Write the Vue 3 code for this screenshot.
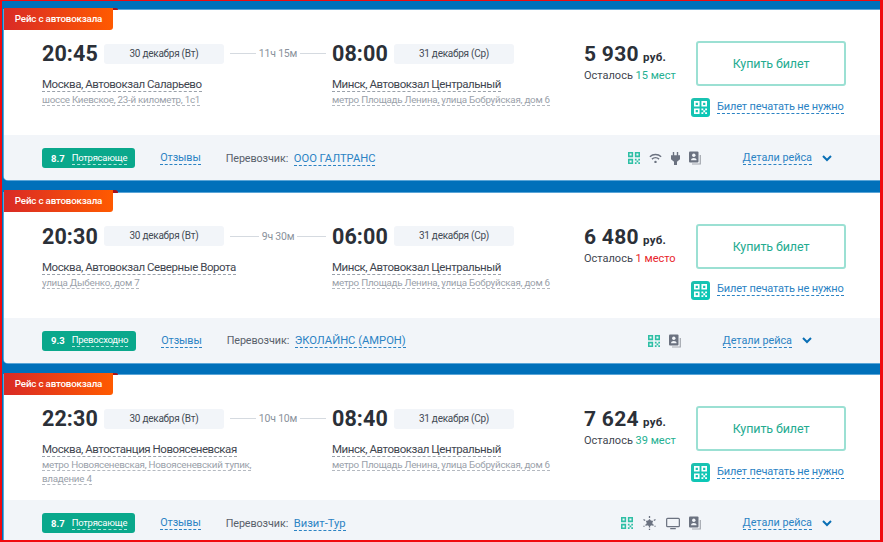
<template>
<div class="page">
  <article v-for="trip in trips" :key="trip.id" class="trip-card">
    <div class="trip-tag">Рейс с автовокзала</div>
    <div class="trip-body">
      <div class="route-col">
        <div class="time-row">
          <strong class="time">{{ trip.depart }}</strong>
          <span class="date-chip">30 декабря (Вт)</span>
          <span class="duration">
            <i></i><em>{{ trip.duration }}</em><i></i>
          </span>
        </div>
        <div class="station"><span>{{ trip.from }}</span></div>
        <div class="address"><span>{{ trip.fromAddress }}</span></div>
      </div>
      <div class="route-col arrive">
        <div class="time-row">
          <strong class="time">{{ trip.arrive }}</strong>
          <span class="date-chip">31 декабря (Ср)</span>
        </div>
        <div class="station"><span>Минск, Автовокзал Центральный</span></div>
        <div class="address"><span>метро Площадь Ленина, улица Бобруйская, дом 6</span></div>
      </div>
      <div class="price-col">
        <div class="price"><span>{{ trip.price }}</span><small>руб.</small></div>
        <div class="seats">Осталось <span :class="{ low: trip.low }">{{ trip.seats }}</span></div>
      </div>
      <div class="buy-col">
        <button class="buy-btn">Купить билет</button>
        <div class="no-print">
          <span class="qr-box">
            <svg width="13" height="13" viewBox="0 0 14 14"><use href="#qr-mark" /></svg>
          </span>
          <a>Билет печатать не нужно</a>
        </div>
      </div>
    </div>
    <div class="trip-footer" :class="{ short: trip.icons.length === 1 }">
      <div class="rating">
        <b>{{ trip.score }}</b><span>{{ trip.scoreLabel }}</span>
      </div>
      <a class="reviews">Отзывы</a>
      <div class="carrier">Перевозчик: <a>{{ trip.carrier }}</a></div>
      <div class="features">
        <svg class="qr-small" width="12" height="12" viewBox="0 0 14 14"><use href="#qr-mark" /></svg>
        <template v-for="icon in trip.icons" :key="icon">
          <svg v-if="icon === 'wifi'" width="13" height="12" viewBox="0 0 15 13" fill="none" stroke="#6b7280" stroke-width="1.6">
            <path d="M1 5c3.600-3.400 9.400-3.400 13 0M3.400 7.800c2.300-2.100 5.900-2.100 8.200 0" />
            <circle cx="7.500" cy="11" r="1.400" fill="#6b7280" stroke="none" />
          </svg>
          <svg v-else-if="icon === 'plug'" width="9" height="13" viewBox="0 0 9 13" fill="#6b7280">
            <path d="M1.800 0h1.400v3.300h2.600V0h1.400v3.300H9v4L6 9.800V13H3V9.800L0 7.300v-4h1.800z" />
          </svg>
          <svg v-else-if="icon === 'doc'" width="12" height="14" viewBox="0 0 12 14">
            <path d="M3 13h8.300V4" fill="none" stroke="#a3a8af" stroke-width="1.200" />
            <rect x="0" y="0.500" width="9.500" height="11" rx="1" fill="#6b7280" />
            <circle cx="4.800" cy="4.200" r="1.700" fill="#f2f5f9" />
            <path d="M2 9.300c0-3.200 5.600-3.200 5.600 0z" fill="#f2f5f9" />
          </svg>
          <svg v-else-if="icon === 'snow'" width="15" height="14" viewBox="0 0 15 14" fill="none" stroke="#6b7280" stroke-width="1.300">
            <circle cx="7.500" cy="7" r="3" fill="#6b7280" stroke="none" />
            <path d="M7.500 0v14M1.500 3.500l12 7M13.500 3.500l-12 7" stroke-dasharray="2 1.200" />
          </svg>
          <svg v-else-if="icon === 'tv'" width="14" height="13" viewBox="0 0 15 13" fill="none" stroke="#6b7280" stroke-width="1.300">
            <rect x="0.700" y="1" width="13.600" height="8.800" rx="1" />
            <path d="M4.500 12h6" />
          </svg>
        </template>
      </div>
      <a class="details">Детали рейса</a>
      <svg class="chevron" width="10" height="7" viewBox="0 0 10 7" fill="none" stroke="#0a6fb5" stroke-width="2">
        <path d="M1 1l4 4 4-4" />
      </svg>
    </div>
  </article>
  <div class="frame"></div>
  <svg width="0" height="0" class="defs">
    <defs>
      <g id="qr-mark">
        <path fill="currentColor" fill-rule="evenodd" d="M0 0h6v6H0zM1.800 1.800v2.400h2.400V1.800zM8 0h6v6H8zM9.800 1.800v2.400h2.400V1.800zM0 8h6v6H0zM1.800 9.800v2.400h2.400V9.800z" />
        <path fill="currentColor" d="M8 8h2v2H8zM12 8h2v2h-2zM10 10h2v2h-2zM8 12h2v2H8zM12 12h2v2h-2z" />
      </g>
    </defs>
  </svg>
</div>
</template>

<script setup>
const trips = [
  {
    id: 1,
    depart: '20:45',
    arrive: '08:00',
    duration: '11ч 15м',
    from: 'Москва, Автовокзал Саларьево',
    fromAddress: 'шоссе Киевское, 23-й километр, 1с1',
    price: '5 930',
    seats: '15 мест',
    low: false,
    score: '8.7',
    scoreLabel: 'Потрясающе',
    carrier: 'ООО ГАЛТРАНС',
    icons: ['wifi', 'plug', 'doc'],
  },
  {
    id: 2,
    depart: '20:30',
    arrive: '06:00',
    duration: '9ч 30м',
    from: 'Москва, Автовокзал Северные Ворота',
    fromAddress: 'улица Дыбенко, дом 7',
    price: '6 480',
    seats: '1 место',
    low: true,
    score: '9.3',
    scoreLabel: 'Превосходно',
    carrier: 'ЭКОЛАЙНС (АМРОН)',
    icons: ['doc'],
  },
  {
    id: 3,
    depart: '22:30',
    arrive: '08:40',
    duration: '10ч 10м',
    from: 'Москва, Автостанция Новоясеневская',
    fromAddress: 'метро Новоясеневская, Новоясеневский тупик, владение 4',
    price: '7 624',
    seats: '39 мест',
    low: false,
    score: '8.7',
    scoreLabel: 'Потрясающе',
    carrier: 'Визит-Тур',
    icons: ['snow', 'tv', 'doc'],
  },
]
</script>

<style>
html,
body {
  margin: 0;
  overflow: hidden;
}
</style>

<style scoped>
.page {
  position: relative;
  box-sizing: border-box;
  width: 883px;
  height: 542px;
  padding: 10px 0 0 4px;
  overflow: hidden;
  background: #0070ba;
  font-family: Roboto, "Liberation Sans", sans-serif;
  color: #3f4650;
}

.frame {
  position: absolute;
  inset: 0;
  border-style: solid;
  border-color: #f00a0e;
  border-width: 1px 3px 2px 2px;
  pointer-events: none;
}

.defs {
  position: absolute;
}

.trip-card {
  position: relative;
  margin-bottom: 12.5px;
  border-radius: 0 0 0 4px;
  background: #fff;
  box-shadow: 0 0 0 1px rgba(150, 200, 235, 0.6);
}

.trip-tag {
  position: absolute;
  top: -2.500px;
  left: 0;
  width: 109px;
  height: 22px;
  border-radius: 0 0 3px 0;
  background: linear-gradient(90deg, #d92a26, #ff5a00);
  color: #fff;
  font-size: 9.800px;
  font-weight: 500;
  line-height: 21px;
  letter-spacing: -0.2px;
  text-align: center;
}

.trip-tag::after {
  content: "";
  position: absolute;
  top: 0;
  left: 100%;
  width: 5px;
  height: 2.500px;
  border-radius: 0 3px 0 0;
  background: #a8101a;
}

.trip-body {
  display: grid;
  grid-template-columns: 290px 252px 112px 190px;
  height: 125px;
  box-sizing: border-box;
  padding: 33px 0 0 38px;
}

.time-row {
  display: flex;
  align-items: center;
  height: 21px;
}

.time {
  width: 62px;
  color: #2b3038;
  font-size: 21.500px;
  font-weight: 700;
  line-height: 21px;
  letter-spacing: 0.1px;
}

.date-chip {
  width: 120px;
  height: 20px;
  border-radius: 3px;
  background: #f2f5f9;
  color: #444b55;
  font-size: 10px;
  line-height: 20px;
  letter-spacing: -0.25px;
  text-align: center;
}

.duration {
  display: flex;
  align-items: center;
  width: 96px;
  margin-left: 6px;
  gap: 3px;
  color: #8a929c;
  font-size: 10.500px;
  letter-spacing: -0.2px;
  white-space: nowrap;
}

.duration i {
  flex: 1;
  height: 1px;
  background: #d5dae0;
}

.duration em {
  font-style: normal;
}

.station {
  margin-top: 13px;
  font-size: 11.500px;
  line-height: 15px;
  letter-spacing: -0.45px;
}

.station span {
  border-bottom: 1px dashed #9aa1aa;
}

.address {
  width: 220px;
  margin-top: 1px;
  color: #9aa1aa;
  font-size: 9.800px;
  line-height: 14px;
  letter-spacing: -0.25px;
}

.arrive .address {
  width: auto;
}

.address span {
  border-bottom: 1px dashed #b4b9c0;
}

.price {
  display: flex;
  align-items: baseline;
  gap: 4px;
  margin-top: -2px;
  color: #2b3038;
  font-size: 21px;
  font-weight: 700;
  line-height: 26px;
  letter-spacing: 0.3px;
}

.price small {
  font-size: 11.500px;
}

.seats {
  margin-top: -2px;
  font-size: 11px;
  line-height: 16px;
}

.seats span {
  color: #23b091;
}

.seats .low {
  color: #e8232a;
}

.buy-col {
  display: flex;
  flex-direction: column;
  margin-top: -2px;
}

.buy-btn {
  width: 150px;
  height: 45px;
  border: 2px solid #9be0d3;
  border-radius: 3px;
  background: #fff;
  color: #23ab90;
  font-family: inherit;
  font-size: 12.500px;
  letter-spacing: -0.1px;
}

.no-print {
  display: flex;
  align-items: center;
  gap: 7px;
  margin: 12px 0 0 -5px;
  font-size: 11px;
  letter-spacing: -0.15px;
}

.qr-box {
  display: flex;
  align-items: center;
  justify-content: center;
  width: 19px;
  height: 19px;
  border-radius: 3px;
  background: linear-gradient(135deg, #22bfae, #06c9b8);
  color: #fff;
}

.no-print a,
.reviews,
.carrier a,
.details,
.rating span {
  border-bottom: 1px dashed currentColor;
  color: #2b83c4;
}

.no-print a {
  margin-top: -2px;
  line-height: 13px;
}

.trip-footer {
  display: flex;
  align-items: center;
  box-sizing: border-box;
  height: 45px;
  padding: 1px 0 0 38px;
  border-radius: 0 0 0 4px;
  background: #f2f5f9;
  font-size: 10.800px;
}

.rating {
  display: flex;
  align-items: center;
  gap: 7px;
  box-sizing: border-box;
  height: 20px;
  padding: 0 8px 0 9px;
  border-radius: 3px;
  background: #0aa88c;
  color: #fff;
  font-size: 9.500px;
}

.rating b {
  font-weight: 700;
}

.rating span {
  border-bottom-color: rgba(255, 255, 255, 0.7);
  color: #fff;
  line-height: 12px;
  letter-spacing: -0.25px;
}

.reviews {
  margin-left: 25px;
  line-height: 13px;
  letter-spacing: -0.1px;
}

.carrier {
  margin-left: 25px;
  color: #59616b;
  letter-spacing: -0.1px;
}

.carrier a {
  margin-left: 3px;
  font-size: 11.200px;
  letter-spacing: 0;
}

.features {
  display: flex;
  align-items: center;
  gap: 8.700px;
  margin-left: auto;
  color: #6b7280;
}

.qr-small {
  color: #2ebfa5;
}

.details {
  margin-left: 42px;
  line-height: 13px;
}

.chevron {
  margin: 0 51px 0 10px;
}

.short .chevron {
  margin-right: 71px;
}
</style>
